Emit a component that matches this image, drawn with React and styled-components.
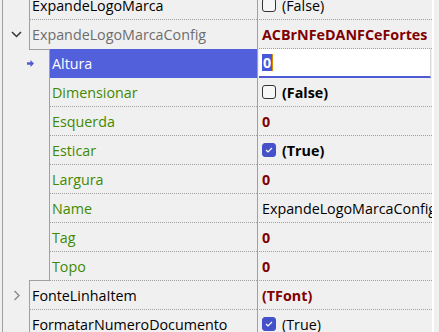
import React from 'react';
import styled, { createGlobalStyle } from 'styled-components';

const Global = createGlobalStyle`
  html, body { margin: 0; padding: 0; background: #f0f0f0; overflow: hidden; }
  body { font-family: 'Open Sans', 'Noto Sans', sans-serif; }
`;

const Frame = styled.div`
  display: flex;
  height: 332px;
  overflow: hidden;
  padding-left: 2px;
`;

const Tree = styled.div`
  width: 429px;
  border-left: 1px solid #a0a0a0;
  display: flex;
  flex-direction: column;
  margin-top: -9px;
`;

const ScrollEdge = styled.div`
  width: 2px;
  background: #ffffff;
`;

const Row = styled.div`
  display: flex;
  height: 29px;
  flex: none;
`;

const Gutter = styled.div`
  width: 26px;
  flex: none;
  display: flex;
  align-items: center;
  justify-content: ${p => (p.end ? 'flex-end' : 'center')};
`;

const Step = styled.div`
  width: 20px;
  flex: none;
  box-sizing: border-box;
  border-top: ${p => (p.first ? '1px solid #a0a0a0' : 'none')};
  border-bottom: ${p => (p.last ? '1px solid #a0a0a0' : 'none')};
`;

const Name = styled.div`
  flex: 1;
  min-width: 0;
  box-sizing: border-box;
  border-left: 1px solid #a0a0a0;
  border-bottom: 1px ${p => (p.open || p.selected ? 'none' : 'dotted')} #a0a0a0;
  padding-left: 2px;
  display: flex;
  align-items: center;
  font-size: 14.3px;
  white-space: nowrap;
  overflow: hidden;
  color: ${p => (p.selected ? '#ffffff' : p.open ? '#6d6d6d' : p.sub ? '#3f8a00' : '#000000')};
  background: ${p => (p.selected ? '#5360dc' : 'transparent')};
`;

const Value = styled.div`
  width: 175px;
  flex: none;
  box-sizing: border-box;
  border-left: 1px solid #a0a0a0;
  border-bottom: 1px ${p => (p.editing ? 'none' : 'dotted')} #a0a0a0;
  padding-left: 4px;
  display: flex;
  align-items: center;
  gap: 6px;
  font-size: 14.3px;
  white-space: nowrap;
  overflow: hidden;
  font-weight: ${p => (p.bold ? 700 : 400)};
  color: ${p => (p.maroon ? '#800000' : '#000000')};
`;

const Editor = styled.div`
  align-self: stretch;
  flex: 1;
  margin: -1px 1px 0 -3px;
  padding-left: 3px;
  background: #ffffff;
  border-bottom: 2px solid #4f5bd5;
  border-right: 1px solid #d8d8d8;
  display: flex;
  align-items: center;
`;

const Selection = styled.span`
  background: #4a57d6;
  color: #ffffff;
  font-weight: 700;
  padding: 0 1px;
  line-height: 17px;
  border-right: 1px solid #e08a00;
`;

const Box = styled.span`
  width: 14px;
  height: 14px;
  box-sizing: border-box;
  border-radius: 3px;
  border: 1px solid ${p => (p.checked ? '#4451c8' : '#333333')};
  background: ${p => (p.checked ? '#4451c8' : '#f7f7f7')};
  display: flex;
  align-items: center;
  justify-content: center;
  flex: none;
`;

const Chevron = ({ open }) =>
  open ? (
    <svg width="11" height="7" viewBox="0 0 11 7">
      <polyline points="1,1 5.5,5.5 10,1" fill="none" stroke="#333" strokeWidth="1.5" />
    </svg>
  ) : (
    <svg width="7" height="11" viewBox="0 0 7 11">
      <polyline points="1.5,1 6,5.5 1.5,10" fill="none" stroke="#8a8a8a" strokeWidth="1.4" />
    </svg>
  );

const Pointer = () => (
  <svg width="7" height="7" viewBox="0 0 7 7" style={{ marginRight: -5, flex: 'none' }}>
    <polygon points="0,2.3 3.5,2.3 3.5,0 7,3.5 3.5,7 3.5,4.7 0,4.7" fill="#4f5bd5" />
  </svg>
);

const Check = ({ checked, children }) => (
  <>
    <Box checked={checked}>
      {checked && (
        <svg width="10" height="8" viewBox="0 0 10 8">
          <polyline points="2,4 4,6 8,2" fill="none" stroke="#ffffff" strokeWidth="1.2" />
        </svg>
      )}
    </Box>
    <span>{children}</span>
  </>
);

const rows = [
  { name: 'ExpandeLogoMarca', value: <Check>(False)</Check> },
  { name: 'ExpandeLogoMarcaConfig', open: true, chevron: 'open', value: 'ACBrNFeDANFCeFortes', bold: true, maroon: true },
  { name: 'Altura', level: 1, selected: true, first: true },
  { name: 'Dimensionar', level: 1, value: <Check>(False)</Check>, bold: true },
  { name: 'Esquerda', level: 1, value: '0', bold: true, maroon: true },
  { name: 'Esticar', level: 1, value: <Check checked>(True)</Check>, bold: true },
  { name: 'Largura', level: 1, value: '0', bold: true, maroon: true },
  { name: 'Name', level: 1, value: 'ExpandeLogoMarcaConfig' },
  { name: 'Tag', level: 1, value: '0', bold: true, maroon: true },
  { name: 'Topo', level: 1, value: '0', bold: true, maroon: true, last: true },
  { name: 'FonteLinhaItem', chevron: 'closed', value: '(TFont)', bold: true, maroon: true },
  { name: 'FormatarNumeroDocumento', value: <Check checked>(True)</Check> },
];

export default function App() {
  return (
    <>
      <Global />
      <Frame>
        <Tree>
          {rows.map((r, i) => (
            <Row key={i}>
              <Gutter end={r.selected}>
                {r.chevron && <Chevron open={r.chevron === 'open'} />}
                {r.selected && <Pointer />}
              </Gutter>
              {r.level === 1 && <Step first={r.first} last={r.last} />}
              <Name sub={r.level === 1} open={r.open} selected={r.selected}>
                {r.name}
              </Name>
              <Value bold={r.bold} maroon={r.maroon} editing={r.selected}>
                {r.selected ? (
                  <Editor>
                    <Selection>0</Selection>
                  </Editor>
                ) : (
                  r.value
                )}
              </Value>
            </Row>
          ))}
        </Tree>
        <ScrollEdge />
      </Frame>
    </>
  );
}
